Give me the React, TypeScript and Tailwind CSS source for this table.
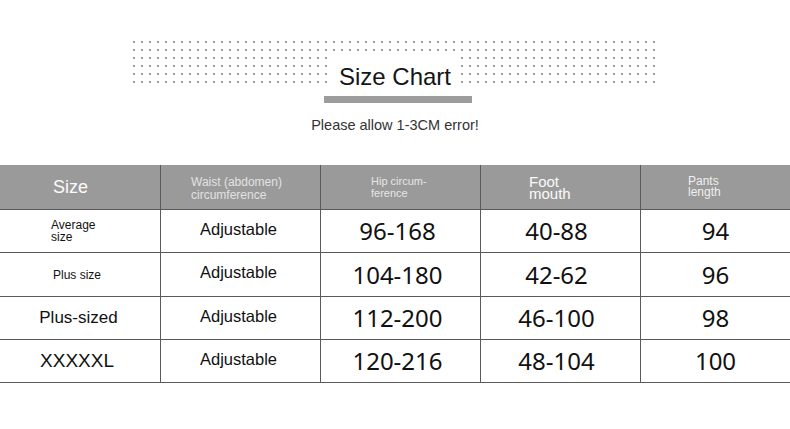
import React from 'react';

const sans = "font-['Liberation_Sans',Arial,sans-serif]";
const num = "font-['Noto_Sans',sans-serif]";

type Row = {
  size: React.ReactNode;
  hip: string;
  foot: string;
  length: string;
  height: string;
};

const rows: Row[] = [
  {
    size: (
      <div className="pl-[51px] text-[12px] leading-[12px]">
        Average
        <br />
        size
      </div>
    ),
    hip: '96-168',
    foot: '40-88',
    length: '94',
    height: 'h-[43px]',
  },
  {
    size: <div className="w-full pr-[6px] text-center text-[12px]">Plus size</div>,
    hip: '104-180',
    foot: '42-62',
    length: '96',
    height: 'h-[44px]',
  },
  {
    size: <div className="w-full pr-[3px] text-center text-[17px]">Plus-sized</div>,
    hip: '112-200',
    foot: '46-100',
    length: '98',
    height: 'h-[43px]',
  },
  {
    size: <div className="w-full pr-[6px] text-center text-[19px]">XXXXXL</div>,
    hip: '120-216',
    foot: '48-104',
    length: '100',
    height: 'h-[43px]',
  },
];

const line = 'border-r border-[#5a5a5a]';

export default function App() {
  return (
    <div className={`w-[790px] h-[429px] bg-white pt-[38px] ${sans}`}>
      {/* dotted banner with title */}
      <div className="mx-auto flex h-[50px] w-[530px] items-end justify-center bg-[radial-gradient(circle_at_4px_4px,#a0a0a0_0.8px,#dedede_1.2px,transparent_1.6px)] bg-[length:8px_8px]">
        <span className="-mb-[4px] bg-white px-[8px] pt-[9px] text-[24px] leading-[30px] text-[#151515]">
          Size Chart
        </span>
      </div>

      <div className="mt-[8px] flex justify-center pl-[6px]">
        <div className="h-[7px] w-[148px] bg-[#9c9c9c]" />
      </div>

      <p className="mt-[13px] text-center text-[14.5px] leading-[18px] text-[#333]">
        Please allow 1-3CM error!
      </p>

      {/* table */}
      <div className="mt-[31px] grid grid-cols-[161px_160px_160px_160px_1fr] text-[#111]">
        <div className={`h-[45px] border-b border-[#5a5a5a] bg-[#9a9a9a] ${line} flex items-center pl-[53px] text-[18px] text-[#fafafa]`}>
          Size
        </div>
        <div className={`h-[45px] border-b border-[#5a5a5a] bg-[#9a9a9a] ${line} flex items-center pl-[30px] pt-[3px] text-[12px] leading-[13px] text-[#e2e2e2]`}>
          <div>
            Waist (abdomen)
            <br />
            circumference
          </div>
        </div>
        <div className={`h-[45px] border-b border-[#5a5a5a] bg-[#9a9a9a] ${line} flex items-center pl-[50px] text-[11px] leading-[12px] text-[#e6e6e6]`}>
          <div>
            Hip circum-
            <br />
            ference
          </div>
        </div>
        <div className={`h-[45px] border-b border-[#5a5a5a] bg-[#9a9a9a] ${line} flex items-center pl-[48px] pt-[2px] text-[15px] leading-[12px] text-[#fafafa]`}>
          <div>
            Foot
            <br />
            mouth
          </div>
        </div>
        <div className="h-[45px] border-b border-[#5a5a5a] bg-[#9a9a9a] flex items-center pl-[47px] text-[12px] leading-[11px] text-[#f0f0f0]">
          <div>
            Pants
            <br />
            length
          </div>
        </div>

        {rows.map((r) => (
          <React.Fragment key={r.hip}>
            <div className={`${r.height} border-b border-[#5a5a5a] ${line} flex items-center`}>{r.size}</div>
            <div className={`${r.height} border-b border-[#5a5a5a] ${line} flex items-center justify-center pb-[4px] pr-[4px] text-[16.5px]`}>
              Adjustable
            </div>
            <div className={`${r.height} border-b border-[#5a5a5a] ${line} flex items-center justify-center pr-[6px] text-[24px] ${num}`}>
              {r.hip}
            </div>
            <div className={`${r.height} border-b border-[#5a5a5a] ${line} flex items-center justify-center pr-[8px] text-[24px] ${num}`}>
              {r.foot}
            </div>
            <div className={`${r.height} border-b border-[#5a5a5a] flex items-center justify-center text-[24px] ${num}`}>
              {r.length}
            </div>
          </React.Fragment>
        ))}
      </div>
    </div>
  );
}
